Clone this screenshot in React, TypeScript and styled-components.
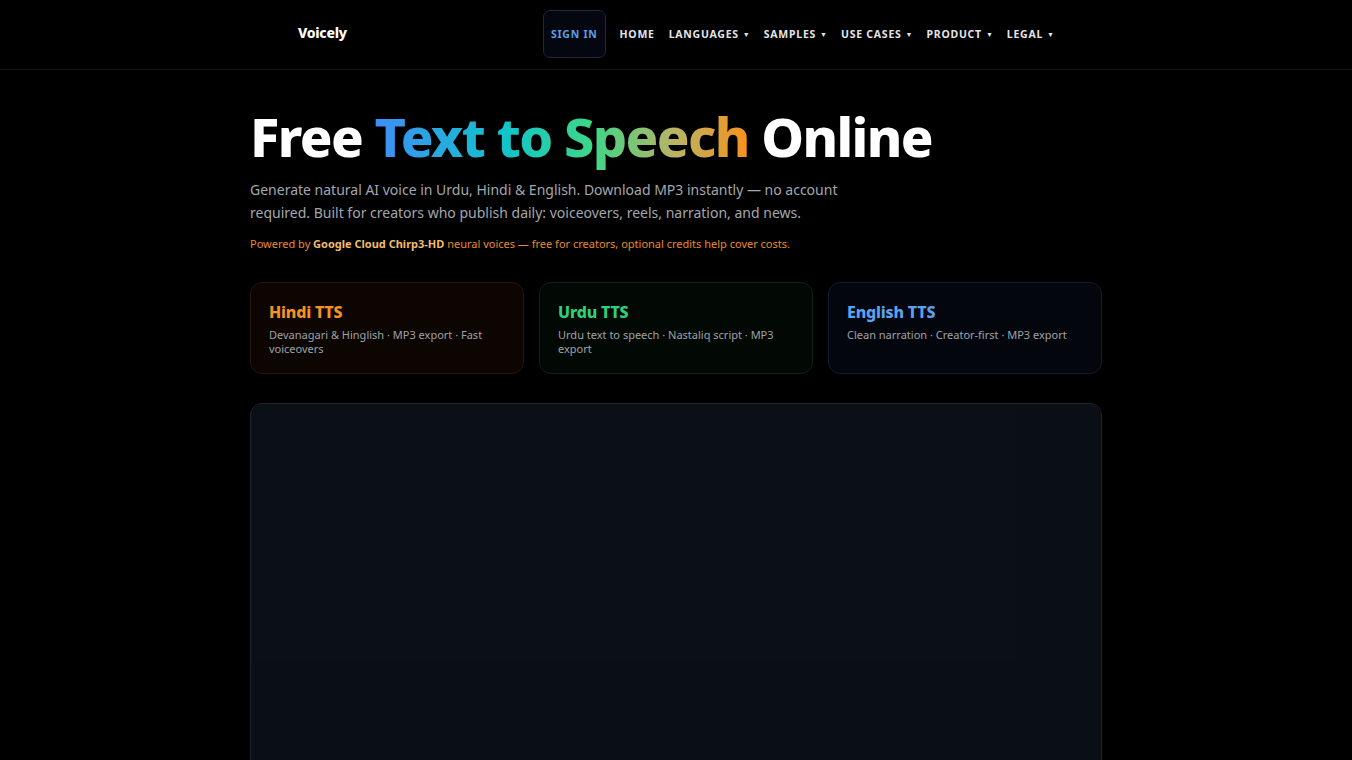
import React from "react";
import styled, { createGlobalStyle } from "styled-components";

const GlobalStyle = createGlobalStyle`
  * { box-sizing: border-box; }
  html, body {
    margin: 0;
    background: #000;
    color: #fff;
    font-family: "Noto Sans", "Open Sans", sans-serif;
  }
`;

const Page = styled.div`
  min-height: 100vh;
  background: #000;
`;

const TopBar = styled.header`
  height: 70px;
  border-bottom: 1px solid #141414;
`;

const TopBarInner = styled.div`
  max-width: 852px;
  height: 100%;
  margin: 0 auto;
  padding: 0 48px 1px;
  display: flex;
  align-items: center;
  justify-content: space-between;
`;

const Logo = styled.a`
  padding-bottom: 3px;
  font-size: 14px;
  font-weight: 800;
  color: #fff;
  text-decoration: none;
  letter-spacing: -0.3px;
`;

const Nav = styled.nav`
  display: flex;
  align-items: center;
  gap: 14px;
`;

const NavLink = styled.a<{ $accent?: boolean }>`
  display: flex;
  align-items: center;
  gap: 4px;
  font-size: 10.5px;
  font-weight: 700;
  letter-spacing: 0.75px;
  text-transform: uppercase;
  color: ${(p) => (p.$accent ? "#5b9fe6" : "#e3e5e8")};
  text-decoration: none;
  cursor: pointer;
`;

const SignIn = styled(NavLink)`
  height: 48px;
  padding: 0 7px;
  border: 1px solid #1c2740;
  border-radius: 7px;
  background: #04070f;
`;

const Caret = styled.span`
  font-size: 7px;
  letter-spacing: 0;
`;

const Main = styled.main`
  max-width: 852px;
  margin: 0 auto;
  padding-top: 34px;
`;

const Title = styled.h1`
  margin: 0;
  font-size: 54px;
  font-weight: 800;
  line-height: 64px;
  letter-spacing: -1.6px;
  color: #fff;
`;

const Gradient = styled.span`
  background: linear-gradient(90deg, #3d8ef6 0%, #12c4c9 35%, #3ed688 58%, #b9b464 80%, #f8901c 100%);
  -webkit-background-clip: text;
  background-clip: text;
  color: transparent;
`;

const Lead = styled.p`
  margin: 11px 0 0;
  max-width: 600px;
  font-size: 14px;
  line-height: 22.5px;
  color: #a3a7ad;
`;

const Powered = styled.p`
  margin: 12px 0 0;
  font-size: 11px;
  line-height: 16px;
  color: #ea8a2b;

  strong {
    color: #f2bc6b;
    font-weight: 700;
  }
`;

const Cards = styled.div`
  margin-top: 30px;
  display: grid;
  grid-template-columns: repeat(3, 1fr);
  gap: 15px;
`;

const tones = {
  hindi: { bg: "#0c0502", border: "#2a1309", title: "#f7931e" },
  urdu: { bg: "#020904", border: "#0f2217", title: "#2fd07a" },
  english: { bg: "#04060e", border: "#161a2c", title: "#5aa2f0" },
};

type Tone = keyof typeof tones;

const Card = styled.a<{ $tone: Tone }>`
  height: 92px;
  padding: 19px 18px;
  border-radius: 12px;
  background: ${(p) => tones[p.$tone].bg};
  border: 1px solid ${(p) => tones[p.$tone].border};
  text-decoration: none;
  display: block;
`;

const CardTitle = styled.div<{ $tone: Tone }>`
  font-size: 16px;
  font-weight: 800;
  line-height: 20px;
  letter-spacing: -0.2px;
  color: ${(p) => tones[p.$tone].title};
`;

const CardText = styled.div`
  margin-top: 6px;
  font-size: 11px;
  line-height: 14px;
  color: #9ea2a8;
`;

const Studio = styled.section`
  margin-top: 29px;
  height: 420px;
  border: 1px solid #1d232d;
  border-radius: 12px;
  background: #0b0f16;
  padding: 4px 0 0 4px;
  display: grid;
  grid-template-columns: 252px 1fr 86px;
  grid-template-rows: 254px 1fr;
  overflow: hidden;
`;

const Shade = styled.div<{ $tint: string }>`
  background: ${(p) => p.$tint};
`;

const cards: { tone: Tone; title: string; text: string }[] = [
  { tone: "hindi", title: "Hindi TTS", text: "Devanagari & Hinglish · MP3 export · Fast voiceovers" },
  { tone: "urdu", title: "Urdu TTS", text: "Urdu text to speech · Nastaliq script · MP3 export" },
  { tone: "english", title: "English TTS", text: "Clean narration · Creator-first · MP3 export" },
];

const menu = ["Languages", "Samples", "Use cases", "Product", "Legal"];

export default function App() {
  return (
    <Page>
      <GlobalStyle />
      <TopBar>
        <TopBarInner>
          <Logo href="#">Voicely</Logo>
          <Nav>
            <SignIn $accent>Sign in</SignIn>
            <NavLink>Home</NavLink>
            {menu.map((m) => (
              <NavLink key={m}>
                {m} <Caret>▼</Caret>
              </NavLink>
            ))}
          </Nav>
        </TopBarInner>
      </TopBar>
      <Main>
        <Title>
          Free <Gradient>Text to Speech</Gradient> Online
        </Title>
        <Lead>
          Generate natural AI voice in Urdu, Hindi &amp; English. Download MP3 instantly — no account
          required. Built for creators who publish daily: voiceovers, reels, narration, and news.
        </Lead>
        <Powered>
          Powered by <strong>Google Cloud Chirp3-HD</strong> neural voices — free for creators, optional
          credits help cover costs.
        </Powered>
        <Cards>
          {cards.map((c) => (
            <Card key={c.tone} $tone={c.tone} href="#">
              <CardTitle $tone={c.tone}>{c.title}</CardTitle>
              <CardText>{c.text}</CardText>
            </Card>
          ))}
        </Cards>
        <Studio>
          <Shade $tint="#0b0f16" />
          <Shade $tint="#0b1016" />
          <Shade $tint="#0a0f15" />
          <Shade $tint="#0a0f15" />
          <Shade $tint="#0a0f15" />
          <Shade $tint="#0a0f15" />
        </Studio>
      </Main>
    </Page>
  );
}
